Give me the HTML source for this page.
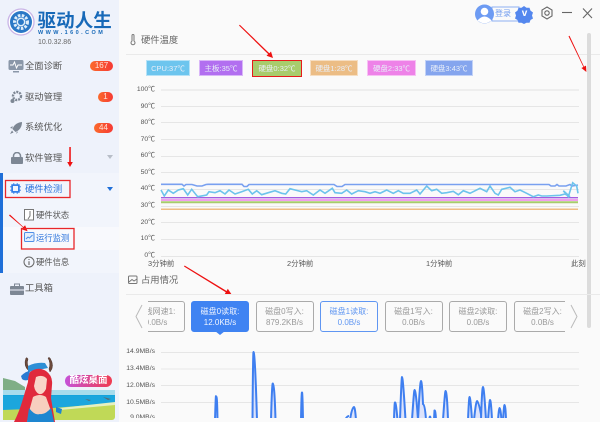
<!DOCTYPE html>
<html lang="zh"><head><meta charset="utf-8"><style>
html,body{margin:0;padding:0}
body{width:600px;height:422px;position:relative;overflow:hidden;background:#fafafa;font-family:"Liberation Sans","Noto Sans CJK SC",sans-serif;color:#555}
div,span{position:absolute;white-space:nowrap;box-sizing:border-box}
.m{left:25px;font-size:9.3px;line-height:12px;color:#555}
.s{left:36px;font-size:8.3px;line-height:12px;color:#555}
.b{height:10px;border-radius:5px;background:linear-gradient(90deg,#fb6a2c,#f63a34);color:#ffe0d6;font-size:8px;line-height:10px;text-align:center}
.c{top:60px;height:16px;color:#e8eef8;font-size:7.5px;line-height:16px;text-align:center;border:1px solid rgba(255,255,255,.5)}
.y{left:128px;width:27px;text-align:right;font-size:6.8px;line-height:10px;color:#555}
.x{top:259px;font-size:7.4px;line-height:10px;color:#555}
.t{font-size:9.3px;line-height:12px;color:#666}
.k{top:301px;width:58px;height:31px;border:1px solid #aaa;border-radius:3px;text-align:center;font-size:8px;line-height:11px;padding-top:4px;color:#999;background:#fafafa}
.k span{position:static;display:block}
</style></head><body>
<div style="left:0;top:0;width:119px;height:422px;background:#eef2fb"></div>
<svg style="position:absolute;left:7px;top:8px" width="28" height="28" viewBox="0 0 28 28"><circle cx="14" cy="14" r="13" fill="#fff" stroke="#c9b4e6" stroke-width="1.3"/><circle cx="14" cy="14" r="11" fill="#2a78c6"/><circle cx="14" cy="14" r="6.5" fill="none" stroke="#dfeefa" stroke-width="3" stroke-dasharray="2.5 1.4"/><circle cx="14" cy="14" r="3.7" fill="none" stroke="#dfeefa" stroke-width="1.5"/></svg>
<div style="left:37.5px;top:9px;font-size:18.5px;line-height:24px;font-weight:bold;color:#1769b8;letter-spacing:.1px">驱动人生</div>
<div style="left:38px;top:29px;font-size:5.5px;line-height:8px;font-weight:bold;color:#1769b8;letter-spacing:2.45px">WWW.160.COM</div>
<div style="left:38px;top:38px;font-size:7px;line-height:10px;color:#666">10.0.32.86</div>

<svg style="position:absolute;left:8px;top:60px" width="17" height="14" viewBox="0 0 17 14"><rect width="15" height="10" x="0.5" rx="1.5" fill="#8a97a8"/><path d="M2 5h3l1.5-3 2 6 1.5-3h4" stroke="#fff" fill="none"/><rect x="5" y="11" width="6" height="1.5" fill="#8a97a8"/></svg>
<div class="m" style="top:60px">全面诊断</div><div class="b" style="left:90px;top:61px;width:23px">167</div>
<svg style="position:absolute;left:9px;top:90px" width="15" height="14" viewBox="0 0 15 14"><circle cx="8" cy="6" r="4" fill="none" stroke="#7d8794" stroke-width="2.4" stroke-dasharray="2 1"/><circle cx="3.5" cy="11" r="2" fill="#7d8794"/></svg>
<div class="m" style="top:91px">驱动管理</div><div class="b" style="left:98px;top:92px;width:15px">1</div>
<svg style="position:absolute;left:9px;top:121px" width="15" height="14" viewBox="0 0 15 14"><path d="M13 1C8 1.5 5 4 3.5 8l3 3C10.5 9.5 13 6 13 1zM3 9.5l-2 3.5 3.5-1.5zM3.5 5L1 7l2.5.5zM8 10.5L7 13l2-2z" fill="#7d8794"/></svg>
<div class="m" style="top:121px">系统优化</div><div class="b" style="left:94px;top:123px;width:19px">44</div>
<svg style="position:absolute;left:10px;top:152px" width="14" height="12" viewBox="0 0 14 12"><path d="M3.5 5V4a3.5 3.5 0 017 0v1" fill="none" stroke="#7d8794" stroke-width="1.5"/><rect x="1" y="5" width="12" height="7" rx="1" fill="#7d8794"/></svg>
<div class="m" style="top:152px">软件管理</div>
<svg style="position:absolute;left:107px;top:155px" width="6" height="4"><path d="M0 0h6L3 4z" fill="#b8bec8"/></svg>

<div style="left:0;top:173px;width:119px;height:100px;background:#f2f5fc"></div>
<div style="left:0;top:173px;width:2.5px;height:100px;background:#1f6fd8"></div>
<div style="left:3px;top:227px;width:116px;height:23px;background:#f8f9fd"></div>
<svg style="position:absolute;left:10px;top:183px" width="11" height="11" viewBox="0 0 13 13"><rect x="2.5" y="2.5" width="8" height="8" fill="none" stroke="#2f7be8" stroke-width="2"/><path d="M0 4.5h2M0 8.5h2M11 4.5h2M11 8.5h2M4.5 0v2M8.5 0v2M4.5 11v2M8.500 11v2" stroke="#2f7be8"/></svg>
<div class="m" style="top:183px;color:#2a72dc">硬件检测</div>
<svg style="position:absolute;left:107px;top:187px" width="6" height="4"><path d="M0 0h6L3 4z" fill="#1f6fd8"/></svg>
<svg style="position:absolute;left:24px;top:209px" width="11" height="12"><rect x=".5" y=".5" width="9" height="10.5" fill="#fff" stroke="#777"/><path d="M6 2v5l-2 3" stroke="#777" fill="none"/></svg>
<div class="s" style="top:209px">硬件状态</div>
<svg style="position:absolute;left:24px;top:232px" width="11" height="12"><rect x=".5" y=".5" width="9.5" height="9" rx="1" fill="#e5effc" stroke="#4f8fe8"/><path d="M2 7l2-2 1.500 1L8.500 3" stroke="#4f8fe8" fill="none"/></svg>
<div class="s" style="top:232px;color:#2a72dc">运行监测</div>
<svg style="position:absolute;left:23px;top:256px" width="12" height="12"><circle cx="6" cy="6" r="5" fill="none" stroke="#666"/><path d="M6 3v1M6 5.2v3.8" stroke="#555"/></svg>
<div class="s" style="top:256px">硬件信息</div>
<svg style="position:absolute;left:10px;top:283px" width="14" height="12" viewBox="0 0 14 12"><path d="M4.5 3V1h5v2" fill="none" stroke="#7d8794"/><rect y="3" width="14" height="9" rx="1" fill="#7d8794"/><path d="M0 7h14" stroke="#eef2fb"/></svg>
<div class="m" style="top:282px">工具箱</div>

<svg style="position:absolute;left:0;top:350px" width="119" height="72" viewBox="0 350 119 422" preserveAspectRatio="xMinYMin slice">
<path d="M3 378l12 3 10 6v5H3z" fill="#7fae86"/>
<rect x="3" y="390" width="112" height="20" fill="#16a3dc"/>
<rect x="3" y="390" width="112" height="5" fill="#a8dcec"/>
<path d="M3 396h112v14H3z" fill="#1ca6dd"/>
<path d="M85 399l6 1-2 1zM103 397l8 2-3 1z" fill="#5c6b72"/>
<path d="M3 410l50-2 62-5v14a3 3 0 01-3 3H3z" fill="#c0d957"/>
<path d="M60 408l55-6v3l-55 5z" fill="#e6f0c0"/>
<path d="M26 358q1-1 2 1-2 6 2 10l-1 2q-6-5-3-13zM50 358q-1-1-2 0 3 5 1 11l1 3q5-6 0-14z" fill="#6b4a3c" stroke="#4a332a" stroke-width=".5"/>
<path d="M28 366q8-4 17-3l3 5-20 4z" fill="#2c8fd6"/>
<path d="M21 376q5-5 9-5l-2 9q-4 1-6-1z" fill="#2a7bd2"/>
<path d="M30 372q8-6 16-1 7 5 6 14l-1 13 2 12 2 12H14q5-10 8-20t6-20q0-6 2-10z" fill="#e02a3c"/>
<path d="M36 377q7-3 11 2l-1 10q-3 6-7 5-4-2-5-8z" fill="#f9d5c8"/>
<path d="M33 397q7-4 13 0l5 14v11H27l3-14z" fill="#f7cfbf"/>
<path d="M29 408q6 8 11 6 5 1 11-6l3 14H27z" fill="#1e86d0"/>
<path d="M56 407l6 2-1 5-5-2z" fill="#1e86d0"/>
</svg>
<div style="left:65px;top:375px;width:47px;height:12px;border-radius:6px;background:linear-gradient(90deg,#c552d8,#f03b50);color:#fff;font-size:9.5px;font-weight:bold;line-height:12px;text-align:center">酷炫桌面</div>

<svg style="position:absolute;left:475px;top:4px" width="60" height="20" viewBox="0 0 60 20">
<rect x="17" y="3" width="27" height="14" fill="#fafafa" stroke="#8db0f2"/>
<circle cx="9.5" cy="10" r="9.5" fill="#6d9bf3"/><circle cx="9.5" cy="7.5" r="3.8" fill="#fff"/><path d="M2.5 16.5q7-8 14 0 -7 5.5-14 0z" fill="#fff"/>
<path d="M49 2l2.500 1.800h3l1 2.800 2.500 1.900-1 3 1 3-2.500 1.500-1 2.800h-3L49 20l-2.500-1.200h-3l-1-2.800L40 14.500l1-3-1-3 2.500-1.900 1-2.800h3z" fill="#5487ee"/>
</svg>
<div style="left:495px;top:8px;font-size:8px;line-height:12px;color:#6f9bef">登录</div>
<div style="left:520px;top:7px;width:9px;font-size:10px;font-weight:bold;line-height:14px;color:#fff;text-align:center">v</div>
<svg style="position:absolute;left:540px;top:6px" width="60" height="15" viewBox="0 0 60 15">
<path d="M7 1l5 3v6l-5 3-5-3V4z" fill="none" stroke="#666" stroke-width="1.1"/><circle cx="7" cy="7" r="2.2" fill="none" stroke="#666" stroke-width="1.1"/>
<path d="M22 6.500h10" stroke="#666" stroke-width="1.1"/><path d="M43 2.500l9 9.500M52 2.500l-9 9.500" stroke="#666" stroke-width="1.1"/>
</svg>

<svg style="position:absolute;left:130px;top:34px" width="6" height="12"><path d="M2 1.500a1 1 0 012 0V7a2 2 0 11-2 0z" fill="none" stroke="#777"/></svg>
<div class="t" style="left:141px;top:34px">硬件温度</div>
<div style="left:126px;top:54px;width:474px;height:1px;background:#eaeaea"></div>
<div class="c" style="left:146px;width:44px;background:#6dc5ee">CPU:37℃</div>
<div class="c" style="left:199px;width:44px;background:#b26ff0">主板:35℃</div>
<div class="c" style="left:252px;top:60px;width:50px;height:17px;background:#a8cc6c;border:1.5px solid #e81a1a">硬盘0:32℃</div>
<div class="c" style="left:310px;width:48px;background:#ecbd85">硬盘1:28℃</div>
<div class="c" style="left:367px;width:49px;background:#ee82e8">硬盘2:33℃</div>
<div class="c" style="left:425px;width:48px;background:#85a5ee">硬盘3:43℃</div>

<div class="y" style="top:85px">100℃</div><div class="y" style="top:101.5px">90℃</div><div class="y" style="top:118px">80℃</div><div class="y" style="top:134.5px">70℃</div><div class="y" style="top:151px">60℃</div><div class="y" style="top:167.5px">50℃</div><div class="y" style="top:184px">40℃</div><div class="y" style="top:201px">30℃</div><div class="y" style="top:217.5px">20℃</div><div class="y" style="top:234px">10℃</div><div class="y" style="top:251px">0℃</div>
<svg style="position:absolute;left:0;top:0" width="600" height="422">
<path d="M161 90H579" stroke="#eee" stroke-width="2"/>
<g stroke="#e6e6e6" stroke-width="1"><path d="M161 106.500H579M161 122.500H579M161 139.500H579M161 156.500H579M161 172.500H579M161 189.500H579M161 206.500H579M161 222.500H579M161 239.500H579M161 256.500H579"/></g>
<path d="M161 209.300H578" stroke="#efbd85" stroke-width="1.5"/>
<path d="M161 202.300H578" stroke="#a8cc6c" stroke-width="2"/>
<path d="M161 200H578" stroke="#ee82e8" stroke-width="1.5"/>
<path d="M161 197.700H578" stroke="#a35ee0" stroke-width="1.3"/>
<path d="M161 184.300H182L184 186 186 184.500H192L197 186H202L206 184.500 208 184.300H242L244 186.500H247L249 184.500H334L337 186.500H342L345 184.500H549L551 186H555L557 184.500 559 186H566L570 184.500 572 186 578 185" fill="none" stroke="#79a0f0" stroke-width="1.6"/>
<polyline fill="none" stroke="#6dc3ec" stroke-width="1.6" points="161,190 164.300,196 168.300,190 173.300,193.300 178.300,190 183.300,188.700 187.700,195 191.700,189.300 197.700,196.700 206.700,195 209,191.700 215,192.700 220,190.700 225,194 229,190 235,194 241.700,191.700 248.300,189.300 252.300,194 256.700,190.700 261.700,194.700 268.300,192.700 275,190.700 281.700,193.300 285.700,194 290,188.700 295,190 301.700,191.700 306.700,190.700 313.300,195 320,190 325,193.300 332.300,188.300 335,192.700 341.700,193.300 346.700,190 351.700,194 358.300,190.700 365,191.700 370,193.300 375,191.700 380,193.300 386.700,190 393.300,193.300 398.300,190.700 403.300,193.300 410,193.300 416.700,190 420,194 426.700,186 431.700,190.700 436.700,189.300 441.700,193.300 446.700,192.700 453.300,191.300 458.300,194.700 463.300,190.700 470,193.300 480,188.300 486.700,191.700 490,186 495,193.300 498.300,195 501.700,189.300 510,187.300 515,191.700 520,190 526.700,193.300 533.300,196.700 538.300,195 541.700,196 546.700,196 560,195.300 565,194 570,196.700 563.300,190.700 568.300,196.700 572.700,182.700 576.700,186 578,193.300"/>
<g fill="#e11" stroke="none">
<path d="M239 25.500l.8-.8 29.500 28.600 1.700-1.800 2 6.500-6.500-2.200 1.700-1.700z"/>
<path d="M568.500 36.200l1-.4 14.500 30.800 2-1 .4 6.400-5-4 2-1z"/>
<path d="M184 266.500l.6-1 42 25.500 1.200-2.200 4.200 6.200-7.500-.5 1.300-2.200z"/>
<path d="M69.300 147h1.500v15h2l-2.800 5-2.800-5h2z"/>
<path d="M9 215.500l.9-1 13.500 12.500 1.700-1.800 2.500 6-6.200-2 1.600-1.800z"/>
</g>
<rect x="5.500" y="180.500" width="64.500" height="17" fill="none" stroke="#e8262a" stroke-width="1.3"/>
<rect x="21.500" y="228.500" width="52.500" height="20.500" fill="none" stroke="#e8262a" stroke-width="1.3"/>
</svg>
<div class="x" style="left:148px">3分钟前</div><div class="x" style="left:287px">2分钟前</div><div class="x" style="left:426px">1分钟前</div><div class="x" style="left:571px">此刻</div>

<div style="left:587.3px;top:33px;width:4px;height:295px;border-radius:2px;background:#dcdcdc"></div>

<svg style="position:absolute;left:128px;top:275px" width="10" height="10"><rect x=".5" y="1" width="8.5" height="7.5" rx="1" fill="none" stroke="#777"/><path d="M1 7l3-2.500 2 1.500 3-2" stroke="#777" fill="none"/></svg>
<div class="t" style="left:141px;top:274px">占用情况</div>
<div style="left:126px;top:294px;width:474px;height:1px;background:#eaeaea"></div>

<div style="left:148px;top:295px;width:417px;height:40px;overflow:hidden">
<div class="k" style="left:-21px;top:6px"><span>无线网速1:</span><span>0.0B/s</span></div>
<div class="k" style="left:43px;top:6px;background:#3f83f2;border-color:#3f83f2;color:#f0f5ff"><span>磁盘0读取:</span><span>12.0KB/s</span></div>
<div class="k" style="left:107.5px;top:6px"><span>磁盘0写入:</span><span>879.2KB/s</span></div>
<div class="k" style="left:172px;top:6px;border-color:#5f96f2;color:#5f96f2"><span>磁盘1读取:</span><span>0.0B/s</span></div>
<div class="k" style="left:236.5px;top:6px"><span>磁盘1写入:</span><span>0.0B/s</span></div>
<div class="k" style="left:301px;top:6px"><span>磁盘2读取:</span><span>0.0B/s</span></div>
<div class="k" style="left:365.5px;top:6px"><span>磁盘2写入:</span><span>0.0B/s</span></div>
<svg style="position:absolute;left:67px;top:36px" width="10" height="4"><path d="M0 0h10L5 4z" fill="#3f83f2"/></svg>
</div>
<svg style="position:absolute;left:0;top:295px" width="600" height="127">
<path d="M142 10l-6 11.500 6 11.500" fill="none" stroke="#bbb"/><path d="M571 10l6 11.500-6 11.500" fill="none" stroke="#bbb"/>
</svg>

<div class="y" style="top:347px;left:125px;width:30px;">14.9MB/s</div><div class="y" style="top:364px;left:125px;width:30px;">13.4MB/s</div><div class="y" style="top:380.5px;left:125px;width:30px;">12.0MB/s</div><div class="y" style="top:397.5px;left:125px;width:30px;">10.5MB/s</div>
<div style="left:125px;top:413px;width:30px;height:5px;overflow:hidden;text-align:right;font-size:6.8px;line-height:10px">9.0MB/s</div>
<svg style="position:absolute;left:0;top:0" width="600" height="418">
<path d="M161 352.500H579M161 385.500H579M161 402.500H579" stroke="#e6e6e6"/><path d="M161 369H579" stroke="#eee" stroke-width="1.600"/>
<g fill="#dde3fb" stroke="#3f7ff0" stroke-width="2">
<path d="M215 420Q216 388 216 399 217 390 217.500 420"/>
<path d="M252.500 420Q253 352 253.500 352 255 352 257 420"/>
<path d="M271 420Q272 383 272.800 383.500 274.500 384 275.500 420"/>
<path d="M301 420Q301.500 392 302 392.500 302.500 392 303 420"/>
<path d="M345 420Q347 416 349 416"/>
<path d="M350 420Q352 407 354 407 355 407 356 420"/>
<path d="M394 420Q394.500 402 395 402.500 396 402 397.500 420"/>
<path d="M400 420Q401.500 377 402 377 403 377 405.500 420"/>
<path d="M412 420Q414 390 414.500 390 416 390 418 420"/>
<path d="M418 420Q420 381 421 381 422 381 423 404 425 405 426 420"/>
<path d="M429 420L430 416 431 420"/>
<path d="M434 420Q434.500 410 434.500 410.500 435.500 410 436 420"/>
<path d="M443 420Q445 391 445.500 391 447 391 448 420"/>
<path d="M468 420Q469 397 469.500 397 470.500 397 472 420"/>
<path d="M474 420Q476 401 477 401 479 402 482 420"/>
<path d="M481 420Q482 387 483 387 484 387 486 420"/>
<path d="M488 420Q489.500 400 490 400 491 400 492 420"/>
<path d="M498 420Q499 408 499.500 408 500.500 408 501.500 420"/>
<path d="M503 420Q504 405 504.500 405 505.500 405 506 420"/>
</g>
</svg>
<div style="left:125px;top:418px;width:475px;height:4px;background:#fafafa"></div>
</body></html>
